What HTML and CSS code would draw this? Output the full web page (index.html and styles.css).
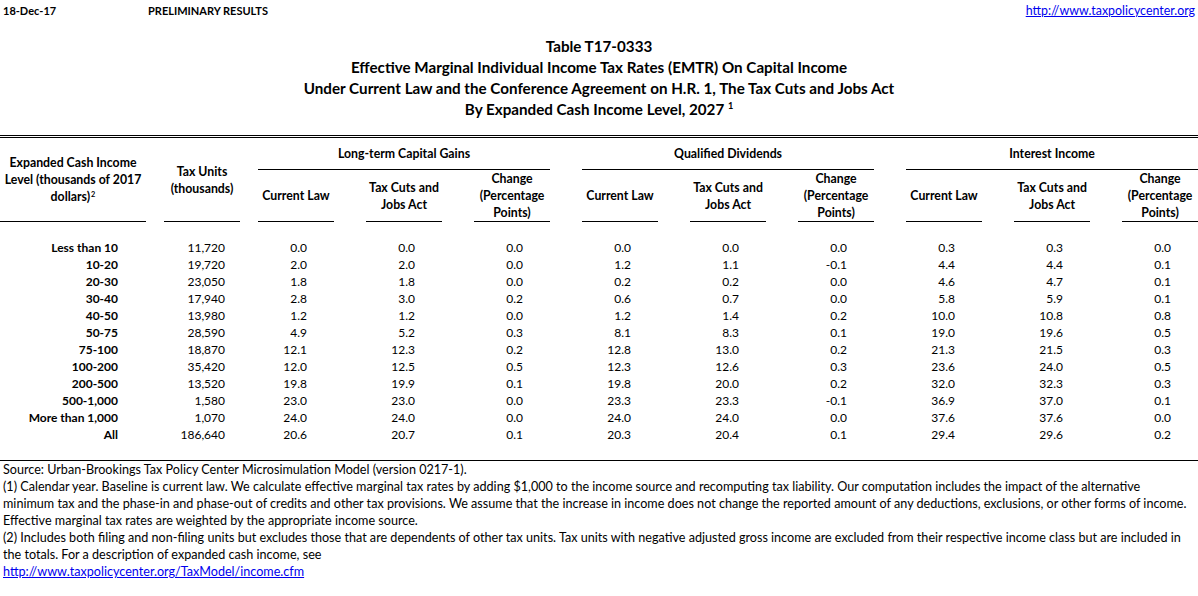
FILE: index.html
```html
<!DOCTYPE html>
<html lang="en">
<head>
<meta charset="utf-8">
<title>Table T17-0333</title>
<link rel="stylesheet" href="styles.css">
</head>
<body>
<div class="page">
  <div class="topbar">
    <span class="date">18-Dec-17</span>
    <span class="prelim">PRELIMINARY RESULTS</span>
    <a class="toplink" href="#">http://www.taxpolicycenter.org</a>
  </div>

  <div class="titles">
    <div class="title-line">Table T17-0333</div>
    <div class="title-line">Effective Marginal Individual Income Tax Rates (EMTR) On Capital Income</div>
    <div class="title-line">Under Current Law and the Conference Agreement on H.R. 1, The Tax Cuts and Jobs Act</div>
    <div class="title-line">By Expanded Cash Income Level, 2027 <sup class="sup sup-title">1</sup></div>
  </div>

  <table class="emtr">
    <colgroup>
      <col class="c-level">
      <col class="c-units">
      <col class="c-first">
      <col class="c-std"><col class="c-std"><col class="c-std"><col class="c-std"><col class="c-std"><col class="c-std"><col class="c-std"><col class="c-std">
    </colgroup>
    <thead>
      <tr class="group-row">
        <th rowspan="2" class="h-level"><div class="hcell hcell-tall hcell-level"><span>Expanded Cash Income Level (thousands of 2017 dollars)<sup class="sup sup-note">2</sup></span></div></th>
        <th rowspan="2" class="h-units"><div class="hcell hcell-tall hcell-units"><span>Tax Units (thousands)</span></div></th>
        <th colspan="3" class="h-group h-group-first"><div class="gcell">Long-term Capital Gains</div></th>
        <th colspan="3" class="h-group"><div class="gcell">Qualified Dividends</div></th>
        <th colspan="3" class="h-group"><div class="gcell">Interest Income</div></th>
      </tr>
      <tr class="sub-row">
        <th class="h-sub h-sub-first"><div class="hcell hcell-sub"><span>Current Law</span></div></th>
        <th class="h-sub"><div class="hcell hcell-sub"><span>Tax Cuts and Jobs Act</span></div></th>
        <th class="h-sub"><div class="hcell hcell-sub"><span>Change (Percentage Points)</span></div></th>
        <th class="h-sub"><div class="hcell hcell-sub"><span>Current Law</span></div></th>
        <th class="h-sub"><div class="hcell hcell-sub"><span>Tax Cuts and Jobs Act</span></div></th>
        <th class="h-sub"><div class="hcell hcell-sub"><span>Change (Percentage Points)</span></div></th>
        <th class="h-sub"><div class="hcell hcell-sub"><span>Current Law</span></div></th>
        <th class="h-sub"><div class="hcell hcell-sub"><span>Tax Cuts and Jobs Act</span></div></th>
        <th class="h-sub"><div class="hcell hcell-sub"><span>Change (Percentage Points)</span></div></th>
      </tr>
    </thead>
    <tbody>
      <tr class="spacer-top"><td colspan="11"></td></tr>
      <tr><td class="lvl">Less than 10</td><td class="units">11,720</td><td class="num">0.0</td><td class="num">0.0</td><td class="num">0.0</td><td class="num">0.0</td><td class="num">0.0</td><td class="num">0.0</td><td class="num">0.3</td><td class="num">0.3</td><td class="num">0.0</td></tr>
      <tr><td class="lvl">10-20</td><td class="units">19,720</td><td class="num">2.0</td><td class="num">2.0</td><td class="num">0.0</td><td class="num">1.2</td><td class="num">1.1</td><td class="num">-0.1</td><td class="num">4.4</td><td class="num">4.4</td><td class="num">0.1</td></tr>
      <tr><td class="lvl">20-30</td><td class="units">23,050</td><td class="num">1.8</td><td class="num">1.8</td><td class="num">0.0</td><td class="num">0.2</td><td class="num">0.2</td><td class="num">0.0</td><td class="num">4.6</td><td class="num">4.7</td><td class="num">0.1</td></tr>
      <tr><td class="lvl">30-40</td><td class="units">17,940</td><td class="num">2.8</td><td class="num">3.0</td><td class="num">0.2</td><td class="num">0.6</td><td class="num">0.7</td><td class="num">0.0</td><td class="num">5.8</td><td class="num">5.9</td><td class="num">0.1</td></tr>
      <tr><td class="lvl">40-50</td><td class="units">13,980</td><td class="num">1.2</td><td class="num">1.2</td><td class="num">0.0</td><td class="num">1.2</td><td class="num">1.4</td><td class="num">0.2</td><td class="num">10.0</td><td class="num">10.8</td><td class="num">0.8</td></tr>
      <tr><td class="lvl">50-75</td><td class="units">28,590</td><td class="num">4.9</td><td class="num">5.2</td><td class="num">0.3</td><td class="num">8.1</td><td class="num">8.3</td><td class="num">0.1</td><td class="num">19.0</td><td class="num">19.6</td><td class="num">0.5</td></tr>
      <tr><td class="lvl">75-100</td><td class="units">18,870</td><td class="num">12.1</td><td class="num">12.3</td><td class="num">0.2</td><td class="num">12.8</td><td class="num">13.0</td><td class="num">0.2</td><td class="num">21.3</td><td class="num">21.5</td><td class="num">0.3</td></tr>
      <tr><td class="lvl">100-200</td><td class="units">35,420</td><td class="num">12.0</td><td class="num">12.5</td><td class="num">0.5</td><td class="num">12.3</td><td class="num">12.6</td><td class="num">0.3</td><td class="num">23.6</td><td class="num">24.0</td><td class="num">0.5</td></tr>
      <tr><td class="lvl">200-500</td><td class="units">13,520</td><td class="num">19.8</td><td class="num">19.9</td><td class="num">0.1</td><td class="num">19.8</td><td class="num">20.0</td><td class="num">0.2</td><td class="num">32.0</td><td class="num">32.3</td><td class="num">0.3</td></tr>
      <tr><td class="lvl">500-1,000</td><td class="units">1,580</td><td class="num">23.0</td><td class="num">23.0</td><td class="num">0.0</td><td class="num">23.3</td><td class="num">23.3</td><td class="num">-0.1</td><td class="num">36.9</td><td class="num">37.0</td><td class="num">0.1</td></tr>
      <tr><td class="lvl">More than 1,000</td><td class="units">1,070</td><td class="num">24.0</td><td class="num">24.0</td><td class="num">0.0</td><td class="num">24.0</td><td class="num">24.0</td><td class="num">0.0</td><td class="num">37.6</td><td class="num">37.6</td><td class="num">0.0</td></tr>
      <tr><td class="lvl">All</td><td class="units">186,640</td><td class="num">20.6</td><td class="num">20.7</td><td class="num">0.1</td><td class="num">20.3</td><td class="num">20.4</td><td class="num">0.1</td><td class="num">29.4</td><td class="num">29.6</td><td class="num">0.2</td></tr>
      <tr class="spacer-bottom"><td colspan="11"></td></tr>
    </tbody>
  </table>

  <div class="notes">
    <div class="note-line">Source: Urban-Brookings Tax Policy Center Microsimulation Model (version 0217-1).</div>
    <div class="note-line">(1) Calendar year. Baseline is current law. We calculate effective marginal tax rates by adding $1,000 to the income source and recomputing tax liability. Our computation includes the impact of the alternative</div>
    <div class="note-line">minimum tax and the phase-in and phase-out of credits and other tax provisions. We assume that the increase in income does not change the reported amount of any deductions, exclusions, or other forms of income.</div>
    <div class="note-line">Effective marginal tax rates are weighted by the appropriate income source.</div>
    <div class="note-line">(2) Includes both filing and non-filing units but excludes those that are dependents of other tax units. Tax units with negative adjusted gross income are excluded from their respective income class but are included in</div>
    <div class="note-line">the totals. For a description of expanded cash income, see</div>
    <div class="note-line"><a class="note-link" href="#">http://www.taxpolicycenter.org/TaxModel/income.cfm</a></div>
  </div>
</div>
</body>
</html>
```

FILE: styles.css
```css
html, body {
  margin: 0;
  padding: 0;
  background: #ffffff;
}

body {
  font-family: Lato, "Open Sans", "DejaVu Sans", sans-serif;
  color: #000000;
  font-size: 12px;
}

.page {
  width: 1198px;
}

/* ---------- top bar ---------- */
.topbar {
  display: flex;
  align-items: center;
  height: 20px;
  font-size: 11px;
  font-weight: bold;
}

.date {
  width: 145px;
  padding-left: 3px;
}

.toplink {
  margin-left: auto;
  margin-right: 3px;
  font-weight: normal;
  font-size: 12.4px;
  color: #0000ee;
  text-decoration: underline;
}

/* ---------- titles ---------- */
.titles {
  margin-top: 16px;
  text-align: center;
  font-weight: bold;
  font-size: 15.2px;
}

.title-line {
  line-height: 21px;
  height: 21px;
}

.sup {
  font-size: 0.6em;
  line-height: 1;
  vertical-align: 4px;
}

.sup-note {
  margin-left: 1px;
}

.sup-title {
  vertical-align: 6px;
}

/* ---------- table ---------- */
.emtr {
  margin-top: 15px;
  width: 1198px;
  border-collapse: collapse;
  table-layout: fixed;
  border-top: 3px double #000;
}

.c-level { width: 146px; }
.c-units { width: 94px; }
.c-first { width: 94px; }
.c-std   { width: 108px; }

.emtr th,
.emtr td {
  padding: 0;
  vertical-align: bottom;
}

.emtr th {
  font-weight: bold;
  font-size: 12.3px;
}

.emtr .h-units { padding-left: 18px; }
.emtr .h-group { padding-left: 32px; }
.emtr .h-group-first { padding-left: 18px; }
.emtr .h-sub { padding-left: 32px; }
.emtr .h-sub-first { padding-left: 18px; }

.gcell {
  height: 31px;
  line-height: 32px;
  border-bottom: 1px solid #000;
  text-align: center;
}

.hcell {
  display: flex;
  align-items: center;
  justify-content: center;
  text-align: center;
  border-bottom: 1px solid #000;
  line-height: 17px;
}

.hcell-tall {
  height: 83px;
}

.hcell-level {
  padding: 0 3px;
}

.hcell-units {
  padding: 0 4px;
}

.hcell-sub {
  height: 51px;
  padding: 0 2px;
}

.spacer-top td {
  height: 16px;
}

.spacer-bottom td {
  height: 16px;
  border-bottom: 1px solid #000;
}

.emtr tbody td {
  height: 17px;
  line-height: 17px;
  text-align: right;
}

.emtr .lvl {
  font-weight: bold;
  padding-right: 28px;
}

.emtr .units {
  padding-right: 15px;
}

.emtr .num {
  padding-right: 27px;
}

/* ---------- notes ---------- */
.notes {
  padding-left: 3px;
  font-size: 12.6px;
}

.note-line {
  height: 17px;
  line-height: 17px;
  white-space: nowrap;
}

.note-link {
  color: #0000ee;
  text-decoration: underline;
}
```
